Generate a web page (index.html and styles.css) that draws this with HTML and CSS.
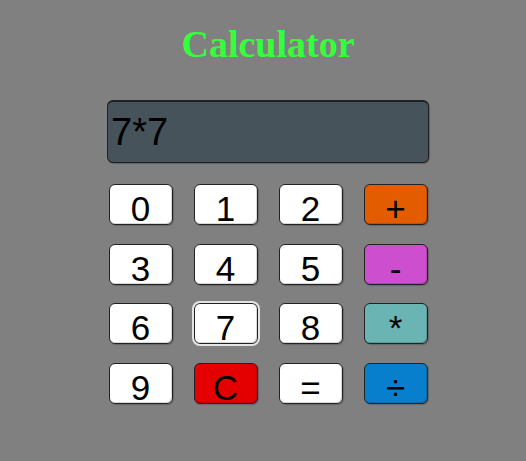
FILE: index.html
```html
<!DOCTYPE html>
<html>
<head>
<meta charset="utf-8">
<link rel="stylesheet" href="styles.css">
</head>
<body>
<div class="app">
  <h1 class="title">Calculator</h1>
  <div class="display">7*7</div>
  <div class="keys">
    <button class="key">0</button>
    <button class="key">1</button>
    <button class="key">2</button>
    <button class="key op-plus">+</button>
    <button class="key">3</button>
    <button class="key">4</button>
    <button class="key">5</button>
    <button class="key op-minus">-</button>
    <button class="key">6</button>
    <button class="key focused">7</button>
    <button class="key">8</button>
    <button class="key op-mul">*</button>
    <button class="key">9</button>
    <button class="key op-clear">C</button>
    <button class="key">=</button>
    <button class="key op-div">÷</button>
  </div>
</div>
</body>
</html>
```
FILE: styles.css
```css
html, body {
  margin: 0;
  padding: 0;
  background: #808080;
  height: 100%;
}
.app {
  display: flex;
  flex-direction: column;
  align-items: center;
  padding-left: 10px;
  padding-top: 22px;
}
.title {
  margin: 0;
  font-family: "Liberation Serif", serif;
  font-weight: bold;
  font-size: 38px;
  line-height: 44px;
  color: #33ff3a;
}
.display {
  margin-top: 34px;
  box-sizing: border-box;
  width: 322px;
  height: 63px;
  background: #47535b;
  border: 1px solid #1e2225;
  border-top-width: 2px;
  border-radius: 6px;
  box-shadow: 1px 1px 1px rgba(0,0,0,0.25);
  font-family: "Liberation Sans", Arial, sans-serif;
  font-size: 38px;
  line-height: 60px;
  padding-left: 3px;
  color: #000;
}
.keys {
  margin-top: 21px;
  display: grid;
  grid-template-columns: repeat(4, 64px);
  grid-auto-rows: 41px;
  column-gap: 21px;
  row-gap: 18.5px;
}
.key {
  box-sizing: border-box;
  margin: 0;
  padding: 0;
  background: #fff;
  border: 1px solid #222;
  border-radius: 6px;
  box-shadow: inset -1px -1px 0 rgba(0,0,0,0.15), 1px 1px 1px rgba(0,0,0,0.2);
  font-family: "Liberation Sans", Arial, sans-serif;
  font-size: 35px;
  line-height: 41px;
  padding-top: 3px;
  color: #000;
}
.op-plus { background: #e35c00; }
.op-minus { background: #cd4fcf; }
.op-mul { background: #6bb4b4; }
.op-clear { background: #e50000; }
.op-div { background: #087fcc; }
.focused {
  outline: 2px solid #e4e4e4;
  outline-offset: 0;
}
```
